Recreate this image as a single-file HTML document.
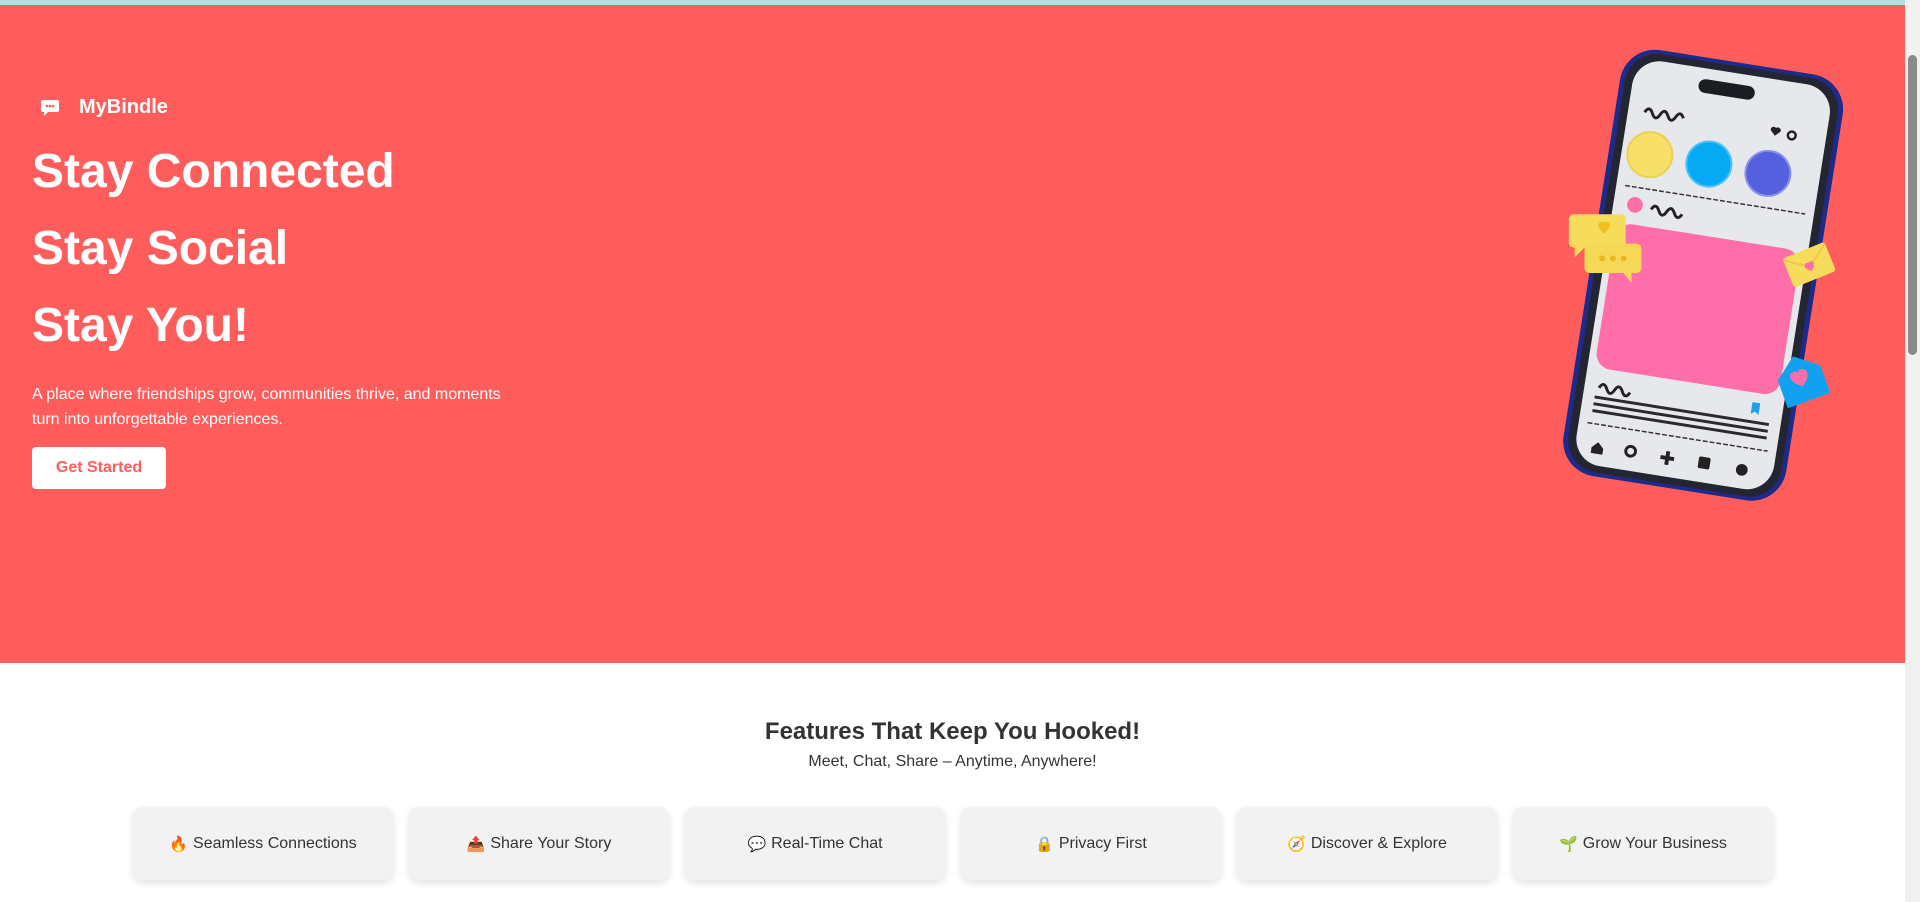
<!DOCTYPE html>
<html><head><meta charset="utf-8"><style>
*{margin:0;padding:0;box-sizing:border-box}
html,body{width:1920px;height:902px;overflow:hidden;background:#fff;font-family:"Liberation Sans",Arial,sans-serif}
.topbar{position:absolute;left:0;top:0;width:1920px;height:5px;background:#b2dfe2}
.hero{position:absolute;left:0;top:5px;width:1905px;height:658px;background:#ff5c5c;color:#fff}
.logo{position:absolute;left:40px;top:91px;display:flex;align-items:center;font-size:20px;font-weight:bold}
.logo svg{margin-right:19px}
h1{position:absolute;left:32px;font-size:48px;font-weight:bold;line-height:1}
.p{position:absolute;left:32px;top:377px;font-size:16px;line-height:25px;width:500px}
.btn{position:absolute;left:32px;top:442px;width:134px;height:42px;background:#fff;border-radius:4px;color:#ff5c5c;font-weight:bold;font-size:16px;display:flex;align-items:center;justify-content:center}
.feat{position:absolute;top:663px;left:0;width:1905px;text-align:center;color:#333}
.feat h2{position:absolute;top:55px;width:100%;font-size:24px;font-weight:bold}
.feat .sub{position:absolute;top:90px;width:100%;font-size:16px}
.cards{position:absolute;left:133px;top:807px;display:flex;gap:16px}
.card{width:260px;height:73px;background:#f2f2f2;border-radius:10px;box-shadow:0 3px 8px rgba(0,0,0,.12);display:flex;align-items:center;justify-content:center;font-size:16px;color:#333}
.card span{margin-right:5px;font-family:"DejaVu Sans",sans-serif;font-size:15px}
.sb{position:absolute;left:1905px;top:0;width:15px;height:902px;background:#f1f1f1}
.thumb{position:absolute;left:1908px;top:55px;width:9px;height:300px;background:#8a8a8a;border-radius:5px}
</style></head><body>
<div class="topbar"></div>
<div class="hero">
 <div class="logo"><svg width="20" height="18" viewBox="0 0 20 18"><path d="M3 1h14a2 2 0 0 1 2 2v8a2 2 0 0 1-2 2H8l-4 4v-4H3a2 2 0 0 1-2-2V3a2 2 0 0 1 2-2z" fill="#fff"/><circle cx="7" cy="7" r="1.3" fill="#ff5c5c"/><circle cx="10" cy="7" r="1.3" fill="#ff5c5c"/><circle cx="13" cy="7" r="1.3" fill="#ff5c5c"/></svg>MyBindle</div>
 <h1 style="top:143px">Stay Connected</h1>
 <h1 style="top:220px">Stay Social</h1>
 <h1 style="top:297px">Stay You!</h1>
 <div class="p">A place where friendships grow, communities thrive, and moments turn into unforgettable experiences.</div>
 <div class="btn">Get Started</div>
 <svg style="position:absolute;left:1548px;top:36px;transform:scale(.98);transform-origin:center" width="320" height="470" viewBox="0 0 320 470">
  <g transform="rotate(9 160 235)">
   <rect x="40" y="15" width="230" height="440" rx="36" fill="#1e2a8a"/>
   <rect x="45" y="19" width="220" height="432" rx="33" fill="#232530"/>
   <rect x="53" y="26" width="204" height="418" rx="28" fill="#e6e8ec"/>
   <rect x="120" y="37" width="58" height="14" rx="7" fill="#1a1d22"/>
   <path d="M70 80q4-8 8 0t8 0t8 0t8 0t8 0" stroke="#222" stroke-width="3" fill="none"/>
   <circle cx="82" cy="122" r="23" fill="#f7e06a" stroke="#ecd054" stroke-width="2"/>
   <circle cx="143" cy="122" r="23" fill="#06aaf2" stroke="#49c3f7" stroke-width="2"/>
   <circle cx="204" cy="122" r="23" fill="#5560de" stroke="#8b93ec" stroke-width="2"/>
   <path d="M200 78l5 5 5-5a3 3 0 0 0-5-3 3 3 0 0 0-5 3z" fill="#222"/><circle cx="222" cy="80" r="4" stroke="#222" stroke-width="2.5" fill="none"/>
   <line x1="62" y1="157" x2="248" y2="157" stroke="#333" stroke-width="1.5" stroke-dasharray="5 2"/>
   <circle cx="75" cy="175" r="8" fill="#ff6fa8"/>
   <path d="M92 177q4-8 8 0t8 0t8 0t8 0" stroke="#222" stroke-width="3" fill="none"/>
   <rect x="60" y="195" width="190" height="150" rx="16" fill="#ff6ea9"/>
   <path d="M68 365q4-8 8 0t8 0t8 0t8 0" stroke="#222" stroke-width="3" fill="none"/>
   <g stroke="#2a2a2a" stroke-width="3"><line x1="65" y1="375" x2="245" y2="375"/><line x1="65" y1="382" x2="245" y2="382"/><line x1="65" y1="389" x2="245" y2="389"/></g>
   <path d="M225 355v12l4-3 4 3v-12z" fill="#1e9ef0"/>
   <line x1="62" y1="402" x2="248" y2="402" stroke="#333" stroke-width="1.5" stroke-dasharray="5 2"/>
   <g fill="#222"><path d="M70 426l6-6 6 6v6h-12z"/><circle cx="110" cy="424" r="5" fill="none" stroke="#222" stroke-width="3"/><rect x="146" y="418" width="4" height="14"/><rect x="141" y="423" width="14" height="4"/><rect x="180" y="418" width="12" height="12" rx="2"/><circle cx="225" cy="425" r="6"/></g>
  </g>
  <rect x="18" y="172" width="58" height="34" rx="5" fill="#f7dc5c"/><path d="M24 204l0 12 12-12z" fill="#f7dc5c"/>
  <rect x="34" y="202" width="58" height="30" rx="5" fill="#f5d956"/><path d="M82 230v12l-10-12z" fill="#f5d956"/>
  <g fill="#e8b820"><circle cx="52" cy="217" r="3"/><circle cx="63" cy="217" r="3"/><circle cx="74" cy="217" r="3"/></g>
  <path d="M48 183a4 4 0 0 1 6-3 4 4 0 0 1 6 3q0 4-6 9-6-5-6-9z" fill="#f0c020"/>
  <g transform="rotate(-22 262 223)"><rect x="240" y="208" width="46" height="32" rx="3" fill="#f7dc5c"/><path d="M240 210l23 16 23-16" fill="none" stroke="#eacb46" stroke-width="2"/><path d="M258 224a3 3 0 0 1 5-2 3 3 0 0 1 5 2q0 3-5 7-5-4-5-7z" fill="#ff6ea9"/></g>
  <g transform="rotate(-20 258 348)"><path d="M235 333l23-18 23 18v30h-46z" fill="#12a0f0"/><path d="M248 335a5 5 0 0 1 9-3 5 5 0 0 1 9 3q0 6-9 12-9-6-9-12z" fill="#ff6ea9"/></g>
 </svg>
</div>
<div class="feat"><h2>Features That Keep You Hooked!</h2><div class="sub">Meet, Chat, Share – Anytime, Anywhere!</div></div>
<div class="cards">
 <div class="card"><span>🔥</span>Seamless Connections</div>
 <div class="card"><span>📤</span>Share Your Story</div>
 <div class="card"><span>💬</span>Real-Time Chat</div>
 <div class="card"><span>🔒</span>Privacy First</div>
 <div class="card"><span>🧭</span>Discover &amp; Explore</div>
 <div class="card"><span>🌱</span>Grow Your Business</div>
</div>
<div class="sb"></div><div class="thumb"></div>
</body></html>
